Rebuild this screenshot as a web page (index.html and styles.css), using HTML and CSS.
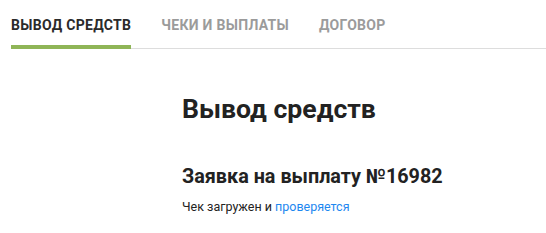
FILE: index.html
```html
<!DOCTYPE html>
<html lang="ru">
<head>
	<meta charset="UTF-8">
	<title>Вывод средств</title>
	<link rel="stylesheet" href="styles.css">
</head>
<body>
<div id="wrap">
	<ul class="tabs">
		<li class="tab active">Вывод средств</li>
		<li class="tab">Чеки и выплаты</li>
		<li class="tab">Договор</li>
	</ul>
	<div class="content">
		<h1 class="title">Вывод средств</h1>
		<h2 class="request">Заявка на выплату №16982</h2>
		<p class="status">Чек загружен и <a href="#" class="link">проверяется</a></p>
	</div>
</div>
</body>
</html>
```

FILE: styles.css
```css
*{margin: 0;padding: 0;box-sizing: border-box;}
ul{list-style: none;}
body{
	background: #fff;
	font-family: Roboto, "Noto Sans", sans-serif;
	color: #222;
}
#wrap{
	padding-left: 11px;
}
.tabs{
	display: flex;
	gap: 30px;
	padding-top: 17px;
	border-bottom: 1px solid #dddddd;
}
.tab{
	font: bold 14px/16px Roboto, sans-serif;
	letter-spacing: 0.3px;
	text-transform: uppercase;
	color: #9b9b9b;
	padding-bottom: 12px;
	border-bottom: 4px solid transparent;
	margin-bottom: -1px;
}
.tab.active{
	color: #2b2b2b;
	border-bottom-color: #8fb557;
}
.content{
	padding: 44px 0 0 171px;
}
.title{
	font-size: 26.6px;
	font-weight: bold;
	line-height: 31px;
	color: #222;
}
.request{
	font-size: 19.8px;
	font-weight: bold;
	line-height: 24px;
	margin-top: 41px;
	color: #222;
}
.status{
	font-size: 12.5px;
	line-height: 14px;
	margin-top: 11px;
	color: #222;
}
.link{
	color: #1e88f0;
	text-decoration: none;
}
```
